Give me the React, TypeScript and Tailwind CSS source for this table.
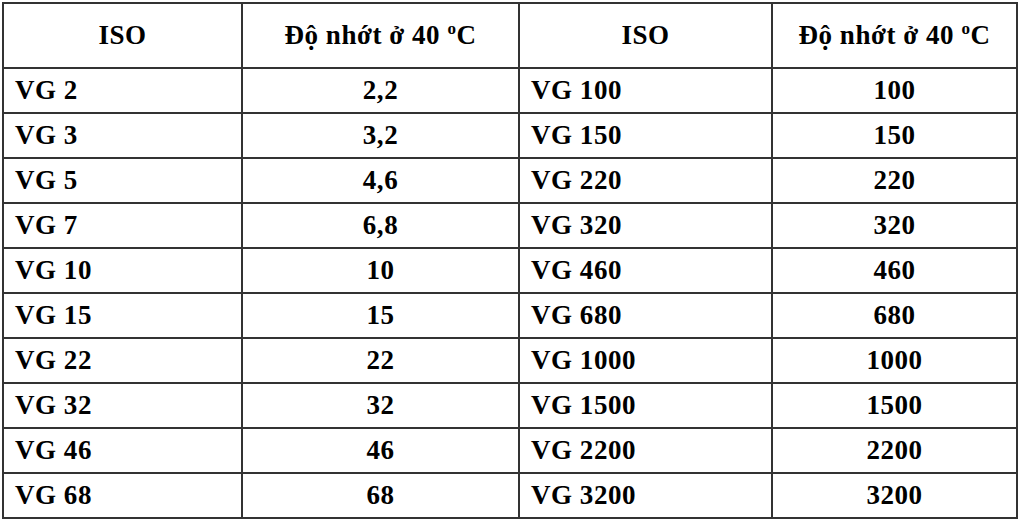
const rows: [string, string, string, string][] = [
  ['VG 2', '2,2', 'VG 100', '100'],
  ['VG 3', '3,2', 'VG 150', '150'],
  ['VG 5', '4,6', 'VG 220', '220'],
  ['VG 7', '6,8', 'VG 320', '320'],
  ['VG 10', '10', 'VG 460', '460'],
  ['VG 15', '15', 'VG 680', '680'],
  ['VG 22', '22', 'VG 1000', '1000'],
  ['VG 32', '32', 'VG 1500', '1500'],
  ['VG 46', '46', 'VG 2200', '2200'],
  ['VG 68', '68', 'VG 3200', '3200'],
];

const Viscosity = () => (
  <>
    Độ nhớt ở 40 <sup className="text-[17px] relative top-[-10px]">o</sup>C
  </>
);

const App = () => {
  return (
    <div className="w-[1024px] h-[525px] bg-white overflow-hidden pt-[2px] pl-[2px]">
      <table
        className="border-collapse text-black font-bold text-[27px] leading-none tracking-[0.02em]"
        style={{ fontFamily: '"Liberation Serif", "Times New Roman", serif' }}
      >
        <colgroup>
          <col className="w-[239px]" />
          <col className="w-[277px]" />
          <col className="w-[253px]" />
          <col className="w-[245px]" />
        </colgroup>
        <thead>
          <tr className="h-[65px]">
            <th className="border-2 border-[#333] text-center font-bold">ISO</th>
            <th className="border-2 border-[#333] text-center font-bold">
              <Viscosity />
            </th>
            <th className="border-2 border-[#333] text-center font-bold">ISO</th>
            <th className="border-2 border-[#333] text-center font-bold">
              <Viscosity />
            </th>
          </tr>
        </thead>
        <tbody>
          {rows.map((r, i) => (
            <tr key={i} className="h-[45px]">
              <td className="border-2 border-[#333] pl-[11px] text-left">{r[0]}</td>
              <td className="border-2 border-[#333] text-center">{r[1]}</td>
              <td className="border-2 border-[#333] pl-[11px] text-left">{r[2]}</td>
              <td className="border-2 border-[#333] text-center">{r[3]}</td>
            </tr>
          ))}
        </tbody>
      </table>
    </div>
  );
};

export default App;
